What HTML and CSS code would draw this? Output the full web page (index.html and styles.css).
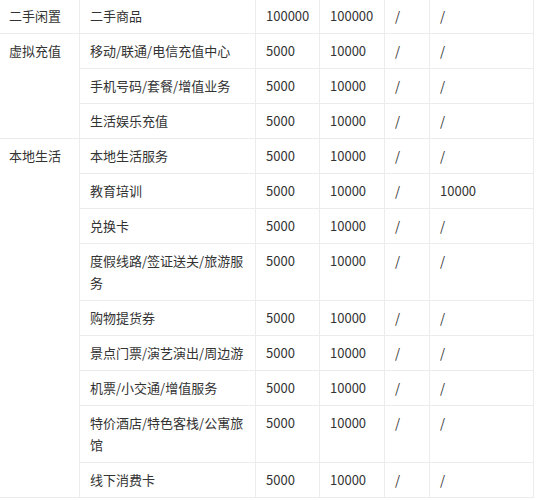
FILE: index.html
```html
<!DOCTYPE html>
<html lang="zh-CN">
<head>
<meta charset="utf-8">
<link rel="stylesheet" href="styles.css">
</head>
<body>
<table class="fee-table">
  <colgroup>
    <col class="c1"><col class="c2"><col class="c3"><col class="c4"><col class="c5"><col class="c6">
  </colgroup>
  <tbody>
    <tr><td>二手闲置</td><td>二手商品</td><td>100000</td><td>100000</td><td>/</td><td>/</td></tr>
    <tr><td rowspan="3">虚拟充值</td><td>移动/联通/电信充值中心</td><td>5000</td><td>10000</td><td>/</td><td>/</td></tr>
    <tr><td>手机号码/套餐/增值业务</td><td>5000</td><td>10000</td><td>/</td><td>/</td></tr>
    <tr><td>生活娱乐充值</td><td>5000</td><td>10000</td><td>/</td><td>/</td></tr>
    <tr><td rowspan="9">本地生活</td><td>本地生活服务</td><td>5000</td><td>10000</td><td>/</td><td>/</td></tr>
    <tr><td>教育培训</td><td>5000</td><td>10000</td><td>/</td><td>10000</td></tr>
    <tr><td>兑换卡</td><td>5000</td><td>10000</td><td>/</td><td>/</td></tr>
    <tr><td>度假线路/签证送关/旅游服务</td><td>5000</td><td>10000</td><td>/</td><td>/</td></tr>
    <tr><td>购物提货券</td><td>5000</td><td>10000</td><td>/</td><td>/</td></tr>
    <tr><td>景点门票/演艺演出/周边游</td><td>5000</td><td>10000</td><td>/</td><td>/</td></tr>
    <tr><td>机票/小交通/增值服务</td><td>5000</td><td>10000</td><td>/</td><td>/</td></tr>
    <tr><td>特价酒店/特色客栈/公寓旅馆</td><td>5000</td><td>10000</td><td>/</td><td>/</td></tr>
    <tr><td>线下消费卡</td><td>5000</td><td>10000</td><td>/</td><td>/</td></tr>
  </tbody>
</table>
</body>
</html>
```
FILE: styles.css
```css
html, body {
  margin: 0;
  padding: 0;
  background: #fff;
}
body {
  font-family: "Noto Sans CJK SC", "Noto Sans", sans-serif;
  font-size: 13px;
  color: #333;
}
.fee-table {
  border-collapse: collapse;
  table-layout: fixed;
  width: 535px;
  margin: -2px 0 0 -2px;
}
.c1 { width: 81px; }
.c2 { width: 176px; }
.c3 { width: 64px; }
.c4 { width: 65px; }
.c5 { width: 45px; }
.c6 { width: 104px; }
.fee-table td {
  border: 1px solid #ececec;
  padding: 6px 10px;
  line-height: 22px;
  vertical-align: top;
  text-align: left;
}
```
